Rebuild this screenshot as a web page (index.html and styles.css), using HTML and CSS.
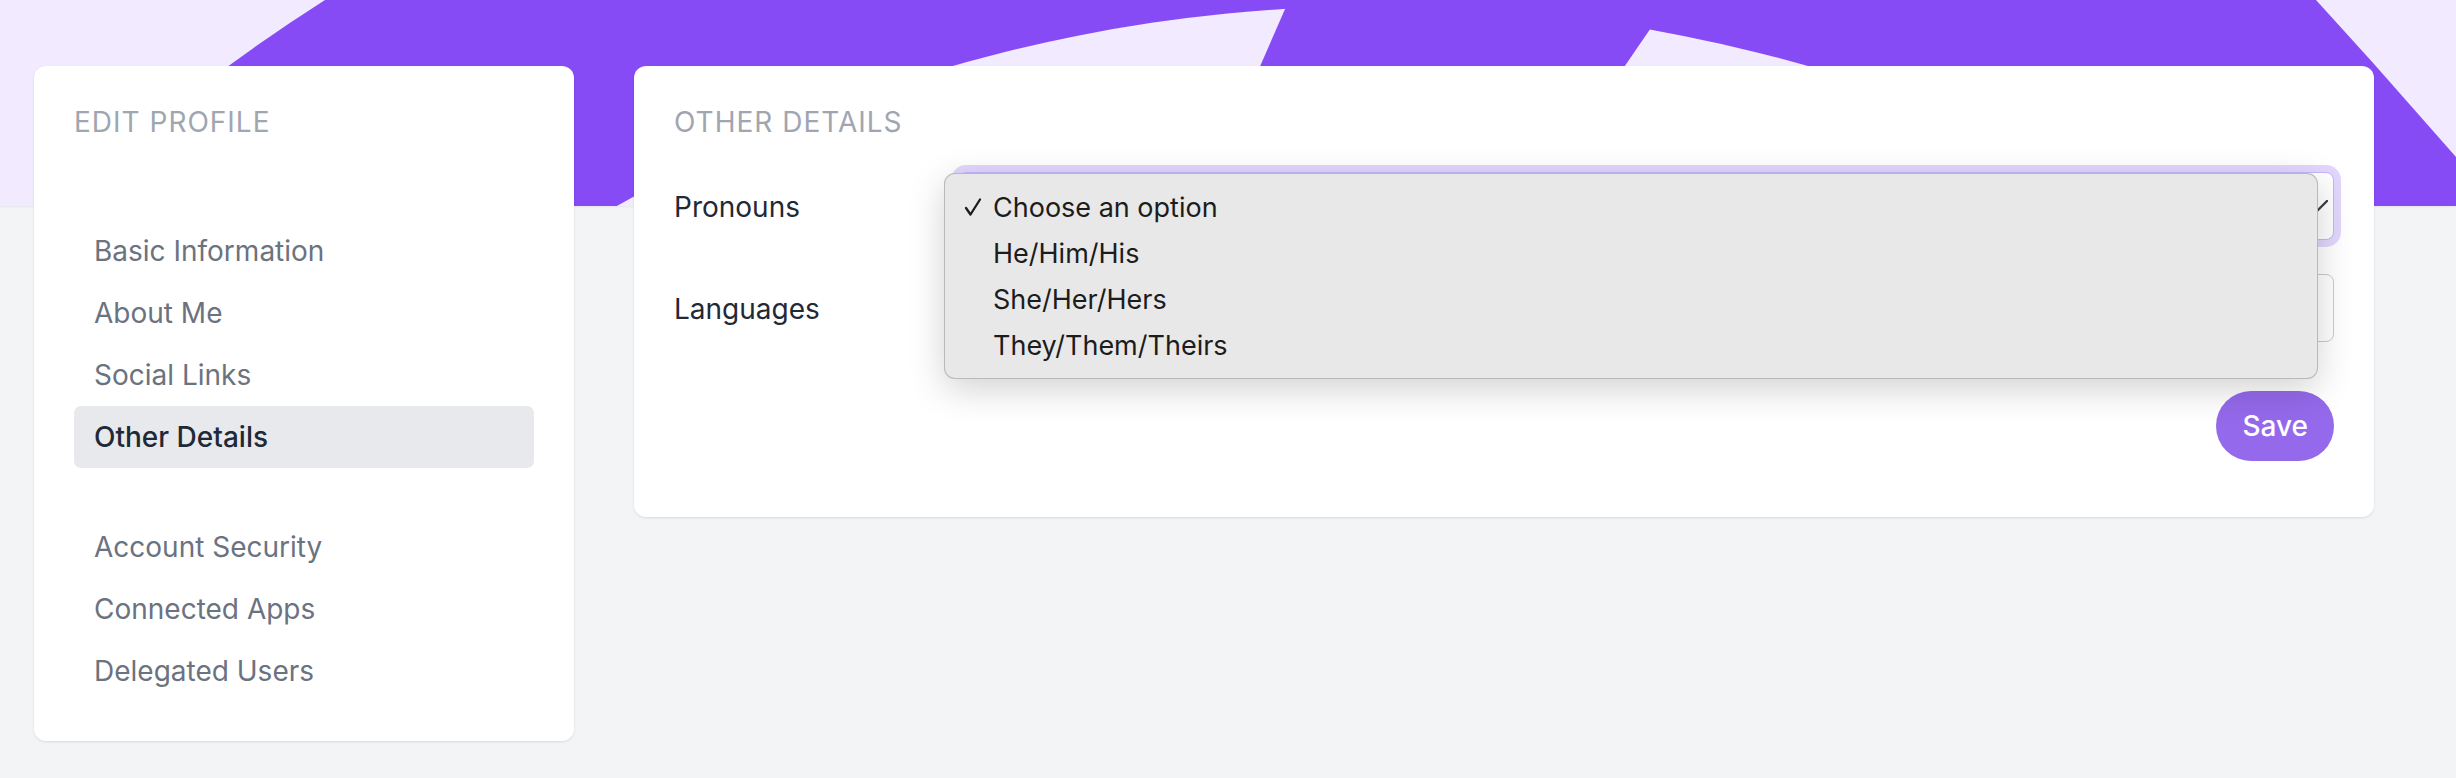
FILE: index.html
```html
<!DOCTYPE html>
<html lang="en">
<head>
<meta charset="utf-8">
<title>Edit Profile – Other Details</title>
<link rel="stylesheet" href="styles.css">
</head>
<body>
<div class="hero">
  <svg class="hero-art" viewBox="0 0 2456 206" preserveAspectRatio="none" aria-hidden="true">
    <path class="hero-ring" d="M325 0 A1786 1786 0 0 0 60 206 L2456 206 L2456 157 L2374 64 L2316 0 Z"/>
    <circle class="hero-hole" cx="1380" cy="1562" r="1556"/>
    <polygon class="hero-ring" points="1289,0 1670,0 1529,206 1199,206"/>
  </svg>
</div>
<main class="layout">
  <aside class="card sidebar">
    <h2 class="card-title">Edit Profile</h2>
    <nav class="nav-group">
      <a class="nav-item" href="#">Basic Information</a>
      <a class="nav-item" href="#">About Me</a>
      <a class="nav-item" href="#">Social Links</a>
      <a class="nav-item is-active" href="#">Other Details</a>
    </nav>
    <nav class="nav-group">
      <a class="nav-item" href="#">Account Security</a>
      <a class="nav-item" href="#">Connected Apps</a>
      <a class="nav-item" href="#">Delegated Users</a>
    </nav>
  </aside>
  <section class="card panel">
    <h2 class="card-title">Other Details</h2>
    <div class="form">
      <div class="field-label">Pronouns</div>
      <div class="select-wrap">
        <div class="select">
          <svg class="chevron" viewBox="0 0 22 12" aria-hidden="true"><polyline points="1,1 11,11 21,1"/></svg>
        </div>
        <ul class="menu">
          <li class="menu-item"><span class="menu-check"><svg class="check" viewBox="0 0 18 20" aria-hidden="true"><polyline points="2,11 6.5,17.5 16,2.5"/></svg></span>Choose an option</li>
          <li class="menu-item"><span class="menu-check"></span>He/Him/His</li>
          <li class="menu-item"><span class="menu-check"></span>She/Her/Hers</li>
          <li class="menu-item"><span class="menu-check"></span>They/Them/Theirs</li>
        </ul>
      </div>
      <div class="field-label">Languages</div>
      <div class="input"></div>
    </div>
    <div class="actions">
      <button class="btn-save" type="button">Save</button>
    </div>
  </section>
</main>
</body>
</html>
```

FILE: styles.css
```css
* { box-sizing: border-box; }
html, body { margin: 0; }
body {
  background: #f3f4f6;
  font-family: Inter, "Noto Sans", sans-serif;
  color: #1f2937;
  min-height: 778px;
}
.hero {
  height: 206px;
  background: #f2eafe;
  overflow: hidden;
  box-shadow: 0 1px 2px rgba(0, 0, 0, 0.06);
}
.hero-art { display: block; width: 100%; height: 206px; }
.hero-ring { fill: #874bf6; }
.hero-hole { fill: #f2eafe; }

.layout {
  position: relative;
  display: flex;
  align-items: flex-start;
  gap: 60px;
  padding: 0 82px 0 34px;
  margin-top: -140px;
}
.card {
  background: #fff;
  border-radius: 12px;
  box-shadow: 0 1px 3px rgba(0, 0, 0, 0.08), 0 1px 2px rgba(0, 0, 0, 0.04);
}
.sidebar { width: 540px; flex: none; padding: 36px 40px 39px; }
.panel { flex: 1; padding: 36px 40px 56px; }

.card-title {
  margin: 0;
  font-size: 28px;
  line-height: 40px;
  font-weight: 400;
  letter-spacing: 1px;
  text-transform: uppercase;
  color: #a0a6b0;
}

.nav-group { display: flex; flex-direction: column; margin-top: 78px; }
.nav-group + .nav-group { margin-top: 48px; }
.nav-item {
  display: block;
  padding: 17px 20px;
  font-size: 28px;
  line-height: 28px;
  color: #6b7280;
  text-decoration: none;
  border-radius: 7px;
}
.nav-item.is-active { background: #e8e9ec; color: #1f2937; font-weight: 500; }

.form {
  display: grid;
  grid-template-columns: 284px 1fr;
  row-gap: 34px;
  align-items: center;
  margin-top: 30px;
}
.field-label { font-size: 28px; line-height: 34px; color: #1f2937; padding-top: 2px; }
.select-wrap { position: relative; }
.select {
  height: 68px;
  border: 1px solid #c4b5fd;
  border-radius: 8px;
  background: #fff;
  box-shadow: 0 0 0 7px rgba(139, 92, 246, 0.25);
  display: flex;
  align-items: center;
  justify-content: flex-end;
  padding-right: 5px;
}
.chevron { width: 22px; height: 12px; fill: none; stroke: #3f3f46; stroke-width: 2.4; stroke-linecap: round; stroke-linejoin: round; }
.input {
  height: 68px;
  border: 1px solid #c7cbd1;
  border-radius: 8px;
  background: #fff;
}
.menu {
  position: absolute;
  left: -14px;
  right: 16px;
  top: 1px;
  z-index: 2;
  margin: 0;
  padding: 10px 0;
  list-style: none;
  background: #e8e8e8;
  border: 1px solid rgba(0, 0, 0, 0.2);
  border-radius: 11px;
  box-shadow: 0 10px 36px rgba(0, 0, 0, 0.18);
}
.menu-item {
  display: flex;
  align-items: center;
  height: 46px;
  padding-left: 19px;
  font-size: 27px;
  color: #1c1c1c;
}
.menu-check { flex: none; width: 29px; display: flex; align-items: center; }
.check { width: 18px; height: 20px; fill: none; stroke: #1c1c1c; stroke-width: 2.3; stroke-linecap: round; stroke-linejoin: round; }

.actions { display: flex; justify-content: flex-end; margin-top: 49px; }
.btn-save {
  height: 70px;
  padding: 0 26px;
  border: 0;
  border-radius: 35px;
  background: #9469eb;
  color: #fff;
  font-family: Inter, "Noto Sans", sans-serif;
  font-size: 28px;
  font-weight: 500;
  line-height: 1;
}
```
